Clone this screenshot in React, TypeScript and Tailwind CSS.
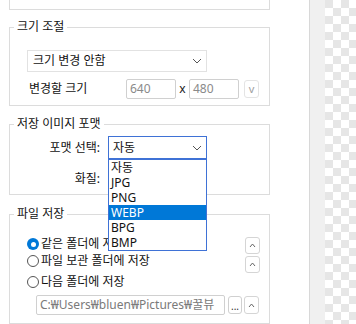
import React from 'react'

const FONT = "font-['Noto_Sans','Noto_Sans_CJK_KR',sans-serif]"

// ── small pieces ──────────────────────────────────────────────────────────────

function Chevron({ up = false }: { up?: boolean }) {
  return (
    <svg width="10" height="6" viewBox="0 0 10 6" className="shrink-0">
      <path
        d={up ? 'M1 5 L5 1 L9 5' : 'M1 1 L5 5 L9 1'}
        fill="none"
        stroke="#555"
        strokeWidth="1"
      />
    </svg>
  )
}

function SpinButton({ className = '' }: { className?: string }) {
  return (
    <div
      className={`flex w-[15px] items-center justify-center rounded-[3px] border border-[#d5d5d5] bg-white ${className}`}
    >
      <svg width="7" height="5" viewBox="0 0 7 5">
        <path d="M1 4 L3.5 1 L6 4" fill="none" stroke="#666" strokeWidth="1" />
      </svg>
    </div>
  )
}

function Radio({ checked, label }: { checked?: boolean; label: string }) {
  return (
    <div className="flex items-center gap-[2px]">
      {checked ? (
        <span className="flex h-[12px] w-[12px] items-center justify-center rounded-full bg-[#0078d7]">
          <span className="h-[5px] w-[5px] rounded-full bg-white" />
        </span>
      ) : (
        <span className="h-[12px] w-[12px] rounded-full border border-[#555]" />
      )}
      <span className="whitespace-nowrap text-[12px] leading-[16px] text-[#111]">{label}</span>
    </div>
  )
}

function Group({ title, children, className = '' }: { title: string; children: React.ReactNode; className?: string }) {
  return (
    <fieldset className={`border border-[#dcdcdc] ${className}`}>
      <legend className="ml-[4px] px-[3px] text-[12px] leading-[16px] text-[#111]">{title}</legend>
      {children}
    </fieldset>
  )
}

const FORMATS = ['자동', 'JPG', 'PNG', 'WEBP', 'BPG', 'BMP']

// ── App ───────────────────────────────────────────────────────────────────────

export default function App() {
  return (
    <div className={`flex h-[324px] w-[356px] overflow-hidden bg-white ${FONT}`}>
      {/* settings column */}
      <div className="w-[309px] shrink-0 pl-[9px]">
        <div className="h-[10px] w-[261px] border-x border-b border-[#dcdcdc]" />

        {/* 크기 조절 */}
        <Group title="크기 조절" className="mt-[9px] w-[261px]">
          <div className="pb-[6px] pl-[17px] pt-[15px]">
            <div className="flex h-[22px] w-[180px] items-center justify-between border border-[#e2e2e2] pl-[5px] pr-[4px]">
              <span className="text-[12px] leading-[16px] text-[#111]">크기 변경 안함</span>
              <Chevron />
            </div>
            <div className="mt-[7px] flex items-center">
              <span className="w-[99px] pl-[2px] text-[12px] leading-[16px] text-[#111]">변경할 크기</span>
              <div className="flex h-[20px] w-[50px] items-center rounded-[2px] border border-[#d0d0d0] pl-[3px] text-[12px] text-[#8a8a8a]">
                640
              </div>
              <span className="w-[13px] text-center text-[12px] leading-[16px] text-[#222]">x</span>
              <div className="flex h-[20px] w-[50px] items-center rounded-[2px] border border-[#d0d0d0] pl-[3px] text-[12px] text-[#8a8a8a]">
                480
              </div>
              <div className="ml-[5px] flex h-[18px] w-[15px] items-center justify-center rounded-[3px] border border-[#e4e4e4] text-[11px] text-[#a0a0a0]">
                v
              </div>
            </div>
          </div>
        </Group>

        {/* 저장 이미지 포맷 */}
        <Group title="저장 이미지 포맷" className="mt-[10px] w-[261px]">
          <div className="pb-[4px] pt-[4px]">
            <div className="flex items-center">
              <span className="w-[90px] text-right text-[12px] leading-[16px] text-[#111]">포맷 선택:</span>
              <div className="relative ml-[8px]">
                <div className="flex h-[23px] w-[99px] items-center justify-between border border-[#3f72d6] pl-[4px] pr-[4px]">
                  <span className="text-[12px] leading-[16px] text-[#111]">자동</span>
                  <Chevron />
                </div>
                {/* open list */}
                <div className="absolute left-0 top-[23px] z-10 w-[99px] border border-[#3f72d6] bg-white">
                  {FORMATS.map(f => (
                    <div
                      key={f}
                      className={`h-[15px] pl-[2px] text-[12px] leading-[15px] ${
                        f === 'WEBP' ? 'bg-[#0078d7] text-white' : 'text-[#111]'
                      }`}
                    >
                      {f}
                    </div>
                  ))}
                </div>
              </div>
            </div>
            <div className="mt-[8px] flex h-[23px] items-center">
              <span className="w-[90px] text-right text-[12px] leading-[16px] text-[#111]">화질:</span>
              <div className="ml-[8px] h-[22px] w-[99px] border border-[#e2e2e2]" />
            </div>
          </div>
        </Group>

        {/* 파일 저장 */}
        <Group title="파일 저장" className="mt-[11px] w-[261px]">
          <div className="pb-[8px] pl-[17px] pr-[9px] pt-[11px]">
            <div className="flex h-[19px] items-start justify-between">
              <div className="pt-[3px]">
                <Radio checked label="같은 폴더에 저장" />
              </div>
              <SpinButton className="mt-[4px] h-[17px]" />
            </div>
            <div className="flex h-[19px] items-start justify-between">
              <div className="pt-[1px]">
                <Radio label="파일 보관 폴더에 저장" />
              </div>
              <SpinButton className="mt-[4px] h-[17px]" />
            </div>
            <div className="flex h-[22px] items-center">
              <Radio label="다음 폴더에 저장" />
            </div>
            <div className="mt-[2px] flex items-center">
              <div className="ml-[9px] flex h-[20px] w-[189px] items-center overflow-hidden whitespace-nowrap rounded-[2px] border border-[#d0d0d0] pl-[3px] text-[12px] text-[#7a7a7a]">
                C:₩Users₩bluen₩Pictures₩꿀뷰
              </div>
              <div className="ml-[3px] flex h-[18px] w-[14px] items-end justify-center rounded-[3px] border border-[#d0d0d0] pb-[2px] text-[10px] leading-[10px] text-[#333]">
                ...
              </div>
              <SpinButton className="ml-[2px] h-[18px]" />
            </div>
          </div>
        </Group>
      </div>

      {/* scrollbar strip */}
      <div className="w-[16px] shrink-0 border-l border-[#d8d8d8] bg-[#f0f0f0]" />

      {/* transparency backdrop */}
      <div className="flex-1 [background-image:repeating-conic-gradient(#fff_0_25%,#e6e6e6_0_50%)] [background-size:16px_16px]" />
    </div>
  )
}
